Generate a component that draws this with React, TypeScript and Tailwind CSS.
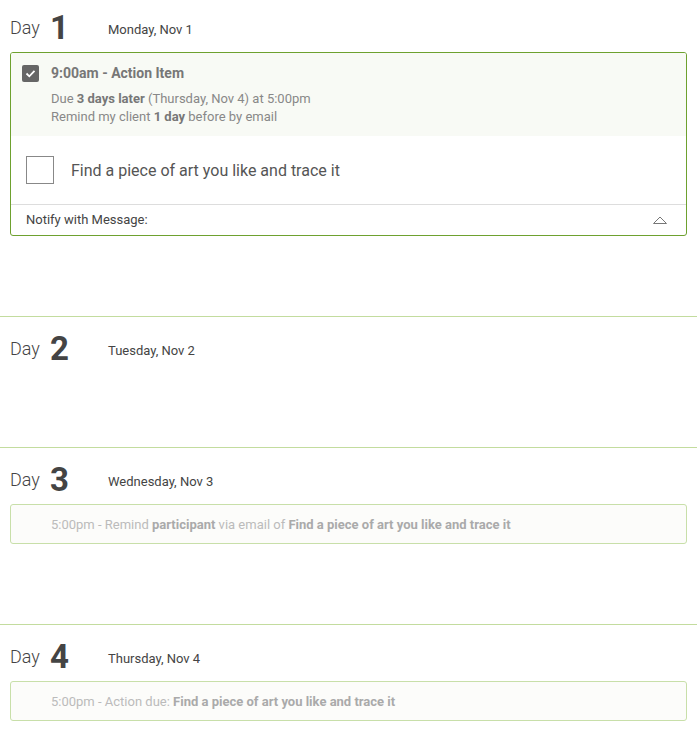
import React from "react";

type Day = {
  num: number;
  date: string;
  kind: "action" | "none" | "remind" | "due";
};

const days: Day[] = [
  { num: 1, date: "Monday, Nov 1", kind: "action" },
  { num: 2, date: "Tuesday, Nov 2", kind: "none" },
  { num: 3, date: "Wednesday, Nov 3", kind: "remind" },
  { num: 4, date: "Thursday, Nov 4", kind: "due" },
];

function DayHeader({ num, date }: { num: number; date: string }) {
  return (
    <div className="flex h-[40px] items-center px-[10px]">
      <div className="flex w-[98px] items-center">
        <span className="text-[18px] font-light text-[#444]">Day</span>
        <span className="ml-[10px] text-[33px] font-bold leading-none text-[#444]">{num}</span>
      </div>
      <span className="mt-[5px] text-[13px] text-[#444]">{date}</span>
    </div>
  );
}

function ActionCard() {
  return (
    <div className="mx-[10px] mt-[5px] overflow-hidden rounded-[3px] border border-[#6ea12f]">
      <div className="bg-[#f8faf5] pb-[10px] pl-[11px] pt-[10px]">
        <div className="flex h-[20px] items-center">
          <span className="flex h-[17px] w-[17px] items-center justify-center rounded-[2px] bg-[#666]">
            <svg width="11" height="9" viewBox="0 0 11 9" fill="none" stroke="#fff" strokeWidth="1.8">
              <path d="M1.5 4.5l2.8 2.8L9.5 1.8" />
            </svg>
          </span>
          <span className="ml-[12px] text-[14px] font-bold text-[#777]">9:00am - Action Item</span>
        </div>
        <div className="mt-[7px] pl-[29px] text-[13px] leading-[18px] text-[#888]">
          <p>
            Due <b className="font-bold text-[#777]">3 days later</b> (Thursday, Nov 4) at 5:00pm
          </p>
          <p>
            Remind my client <b className="font-bold text-[#777]">1 day</b> before by email
          </p>
        </div>
      </div>
      <div className="flex h-[68px] items-center pl-[15px]">
        <span className="h-[28px] w-[28px] border border-[#888] bg-white" />
        <span className="ml-[17px] mt-[2px] text-[16px] text-[#555]">Find a piece of art you like and trace it</span>
      </div>
      <div className="flex h-[31px] items-center justify-between border-t border-[#ddd] pl-[15px] pr-[18px]">
        <span className="text-[13px] text-[#444]">Notify with Message:</span>
        <svg width="16" height="10" viewBox="0 0 16 10" fill="none" stroke="#777" strokeWidth="1">
          <path d="M1.5 8.5h13L8 2z" />
        </svg>
      </div>
    </div>
  );
}

function GhostCard({ children }: { children: React.ReactNode }) {
  return (
    <div className="mx-[10px] mt-[5px] flex h-[40px] items-center rounded-[3px] border border-[#c8dfa9] bg-[#fcfcfa] pl-[40px] pt-[2px] text-[13px] text-[#bbb]">
      <p>{children}</p>
    </div>
  );
}

export default function App() {
  return (
    <div className="min-h-screen w-[697px] bg-white" style={{ fontFamily: "Roboto, 'Liberation Sans', sans-serif" }}>
      {days.map((d, i) => (
        <section
          key={d.num}
          className={
            i === 0
              ? "pb-[80px] pt-[7px]"
              : d.kind === "none"
                ? "border-t border-[#c3dc9e] pb-[79px] pt-[11px]"
                : "border-t border-[#c3dc9e] pb-[80px] pt-[11px]"
          }
        >
          <DayHeader num={d.num} date={d.date} />
          {d.kind === "action" && <ActionCard />}
          {d.kind === "remind" && (
            <GhostCard>
              5:00pm - Remind <b className="font-bold text-[#aaa]">participant</b> via email of{" "}
              <b className="font-bold text-[#aaa]">Find a piece of art you like and trace it</b>
            </GhostCard>
          )}
          {d.kind === "due" && (
            <GhostCard>
              5:00pm - Action due: <b className="font-bold text-[#aaa]">Find a piece of art you like and trace it</b>
            </GhostCard>
          )}
        </section>
      ))}
    </div>
  );
}
